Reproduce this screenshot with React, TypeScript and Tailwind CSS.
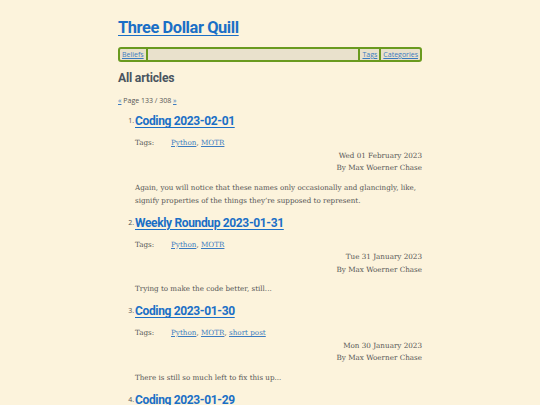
import React from "react";

const sans = { fontFamily: '"Open Sans", "Noto Sans", sans-serif' };
const head = { fontFamily: 'Roboto, "Noto Sans", sans-serif' };
const serif = { fontFamily: '"DejaVu Serif", "Liberation Serif", serif' };

type Post = { title: string; tags: string[]; date: string; excerpt: string };

const posts: Post[] = [
  {
    title: "Coding 2023-02-01",
    tags: ["Python", "MOTR"],
    date: "Wed 01 February 2023",
    excerpt:
      "Again, you will notice that these names only occasionally and glancingly, like, signify properties of the things they\u2019re supposed to represent.",
  },
  {
    title: "Weekly Roundup 2023-01-31",
    tags: ["Python", "MOTR"],
    date: "Tue 31 January 2023",
    excerpt: "Trying to make the code better, still...",
  },
  {
    title: "Coding 2023-01-30",
    tags: ["Python", "MOTR", "short post"],
    date: "Mon 30 January 2023",
    excerpt: "There is still so much left to fix this up...",
  },
  {
    title: "Coding 2023-01-29",
    tags: ["Python", "MOTR"],
    date: "Sun 29 January 2023",
    excerpt: "More work on the code.",
  },
];

function Item({ post, n }: { post: Post; n: number }) {
  return (
    <li className="flex mb-[7px]">
      <div className="w-[17px] shrink-0 text-right pr-[1px] text-[7px] leading-[18px] text-[#555]" style={sans}>
        {n}.
      </div>
      <div className="flex-1">
        <a
          href="#"
          className="block text-[12px] font-bold leading-[18px] tracking-[-0.35px] text-[#1a6fc6] underline underline-offset-[2px]"
          style={head}
        >
          {post.title}
        </a>
        <div className="mt-[7px] flex text-[7.2px] leading-[12.5px] text-[#555]" style={serif}>
          <span className="w-[36px]">Tags:</span>
          <span>
            {post.tags.map((t, i) => (
              <React.Fragment key={t}>
                <a href="#" className="text-[#3b7bc0] underline">
                  {t}
                </a>
                {i < post.tags.length - 1 ? ", " : ""}
              </React.Fragment>
            ))}
          </span>
        </div>
        <div className="text-right text-[7.2px] leading-[12.5px] text-[#555]" style={serif}>
          <div>{post.date}</div>
          <div>By Max Woerner Chase</div>
        </div>
        <p className="mt-[6px] text-[7.15px] leading-[13px] text-[#555]" style={serif}>
          {post.excerpt}
        </p>
      </div>
    </li>
  );
}

export default function App() {
  return (
    <div className="h-[405px] w-full bg-[#fcf3dc] overflow-hidden">
      <div className="mx-auto w-[304px] pt-[15px]">
        <h1>
          <a
            href="#"
            className="text-[16.4px] font-bold leading-[22px] tracking-[-0.4px] text-[#1a6fc6] underline underline-offset-[2px]"
            style={head}
          >
            Three Dollar Quill
          </a>
        </h1>
        <nav
          className="mt-[8px] flex h-[15px] items-center rounded-[3px] border-2 border-[#6a9a1f] bg-[#e9e1cc] text-[7px] leading-[11px]"
          style={sans}
        >
          <a href="#" className="px-[2px] text-[#3b7bc0] underline">
            Beliefs
          </a>
          <span className="h-[11px] w-[2px] bg-[#6a9a1f]" />
          <span className="flex-1" />
          <span className="h-[11px] w-[2px] bg-[#6a9a1f]" />
          <a href="#" className="px-[2px] text-[#3b7bc0] underline">
            Tags
          </a>
          <span className="h-[11px] w-[2px] bg-[#6a9a1f]" />
          <a href="#" className="px-[2px] text-[#3b7bc0] underline">
            Categories
          </a>
        </nav>
        <h2 className="mt-[8px] text-[12.2px] font-bold leading-[16px] tracking-[-0.2px] text-[#4a5560]" style={head}>
          All articles
        </h2>
        <div className="mt-[10px] text-[7px] leading-[10px] text-[#555]" style={sans}>
          <a href="#" className="text-[#3b7bc0] underline">
            «
          </a>{" "}
          Page 133 / 308{" "}
          <a href="#" className="text-[#3b7bc0] underline">
            »
          </a>
        </div>
        <ol className="mt-[6px]">
          {posts.map((p, i) => (
            <Item key={i} post={p} n={i + 1} />
          ))}
        </ol>
      </div>
    </div>
  );
}
